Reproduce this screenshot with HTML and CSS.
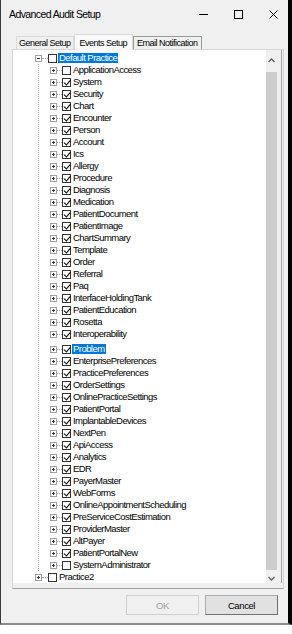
FILE: index.html
```html
<!DOCTYPE html>
<html lang="en">
<head>
    <meta charset="UTF-8">
    <meta name="viewport" content="width=device-width, initial-scale=1.0">
    <title>Advanced Audit Setup</title>
    <link rel="stylesheet" href="styles.css">
</head>
<body>

    <div class="window">
        <div class="titlebar">
            <span class="title">Advanced Audit Setup</span>
            <div class="controls">
                <svg width="9" height="9" viewBox="0 0 9 9"><path d="M0 4.5 H9" stroke="#000" stroke-width="1"/></svg>
                <svg width="9" height="9" viewBox="0 0 9 9"><rect x="0.5" y="0.5" width="8" height="8" fill="none" stroke="#000" stroke-width="1"/></svg>
                <svg width="9" height="9" viewBox="0 0 9 9"><path d="M0.5 0.5 L8.5 8.5 M8.5 0.5 L0.5 8.5" stroke="#000" stroke-width="1"/></svg>
            </div>
        </div>

        <div class="tabs">
            <div class="tab">General Setup</div>
            <div class="tab active">Events Setup</div>
            <div class="tab email">Email Notification</div>
        </div>

        <div class="tab-page">
            <div class="treebox">
                <div class="tree">
                    <div class="node root">
                        <span class="exp open"></span><i class="ln"></i><span class="chk"></span><span class="lbl sel">Default Practice</span>
                    </div>
                    <div class="children">
                        <div class="node"><span class="exp"></span><i class="ln"></i><span class="chk"></span><span class="lbl">ApplicationAccess</span></div>
                        <div class="node"><span class="exp"></span><i class="ln"></i><span class="chk on"></span><span class="lbl">System</span></div>
                        <div class="node"><span class="exp"></span><i class="ln"></i><span class="chk on"></span><span class="lbl">Security</span></div>
                        <div class="node"><span class="exp"></span><i class="ln"></i><span class="chk on"></span><span class="lbl">Chart</span></div>
                        <div class="node"><span class="exp"></span><i class="ln"></i><span class="chk on"></span><span class="lbl">Encounter</span></div>
                        <div class="node"><span class="exp"></span><i class="ln"></i><span class="chk on"></span><span class="lbl">Person</span></div>
                        <div class="node"><span class="exp"></span><i class="ln"></i><span class="chk on"></span><span class="lbl">Account</span></div>
                        <div class="node"><span class="exp"></span><i class="ln"></i><span class="chk on"></span><span class="lbl">Ics</span></div>
                        <div class="node"><span class="exp"></span><i class="ln"></i><span class="chk on"></span><span class="lbl">Allergy</span></div>
                        <div class="node"><span class="exp"></span><i class="ln"></i><span class="chk on"></span><span class="lbl">Procedure</span></div>
                        <div class="node"><span class="exp"></span><i class="ln"></i><span class="chk on"></span><span class="lbl">Diagnosis</span></div>
                        <div class="node"><span class="exp"></span><i class="ln"></i><span class="chk on"></span><span class="lbl">Medication</span></div>
                        <div class="node"><span class="exp"></span><i class="ln"></i><span class="chk on"></span><span class="lbl">PatientDocument</span></div>
                        <div class="node"><span class="exp"></span><i class="ln"></i><span class="chk on"></span><span class="lbl">PatientImage</span></div>
                        <div class="node"><span class="exp"></span><i class="ln"></i><span class="chk on"></span><span class="lbl">ChartSummary</span></div>
                        <div class="node"><span class="exp"></span><i class="ln"></i><span class="chk on"></span><span class="lbl">Template</span></div>
                        <div class="node"><span class="exp"></span><i class="ln"></i><span class="chk on"></span><span class="lbl">Order</span></div>
                        <div class="node"><span class="exp"></span><i class="ln"></i><span class="chk on"></span><span class="lbl">Referral</span></div>
                        <div class="node"><span class="exp"></span><i class="ln"></i><span class="chk on"></span><span class="lbl">Paq</span></div>
                        <div class="node"><span class="exp"></span><i class="ln"></i><span class="chk on"></span><span class="lbl">InterfaceHoldingTank</span></div>
                        <div class="node"><span class="exp"></span><i class="ln"></i><span class="chk on"></span><span class="lbl">PatientEducation</span></div>
                        <div class="node"><span class="exp"></span><i class="ln"></i><span class="chk on"></span><span class="lbl">Rosetta</span></div>
                        <div class="node"><span class="exp"></span><i class="ln"></i><span class="chk on"></span><span class="lbl">Interoperability</span></div>
                        <div class="node gap"><span class="exp"></span><i class="ln"></i><span class="chk on"></span><span class="lbl sel">Problem</span></div>
                        <div class="node"><span class="exp"></span><i class="ln"></i><span class="chk on"></span><span class="lbl">EnterprisePreferences</span></div>
                        <div class="node"><span class="exp"></span><i class="ln"></i><span class="chk on"></span><span class="lbl">PracticePreferences</span></div>
                        <div class="node"><span class="exp"></span><i class="ln"></i><span class="chk on"></span><span class="lbl">OrderSettings</span></div>
                        <div class="node"><span class="exp"></span><i class="ln"></i><span class="chk on"></span><span class="lbl">OnlinePracticeSettings</span></div>
                        <div class="node"><span class="exp"></span><i class="ln"></i><span class="chk on"></span><span class="lbl">PatientPortal</span></div>
                        <div class="node"><span class="exp"></span><i class="ln"></i><span class="chk on"></span><span class="lbl">ImplantableDevices</span></div>
                        <div class="node"><span class="exp"></span><i class="ln"></i><span class="chk on"></span><span class="lbl">NextPen</span></div>
                        <div class="node"><span class="exp"></span><i class="ln"></i><span class="chk on"></span><span class="lbl">ApiAccess</span></div>
                        <div class="node"><span class="exp"></span><i class="ln"></i><span class="chk on"></span><span class="lbl">Analytics</span></div>
                        <div class="node"><span class="exp"></span><i class="ln"></i><span class="chk on"></span><span class="lbl">EDR</span></div>
                        <div class="node"><span class="exp"></span><i class="ln"></i><span class="chk on"></span><span class="lbl">PayerMaster</span></div>
                        <div class="node"><span class="exp"></span><i class="ln"></i><span class="chk on"></span><span class="lbl">WebForms</span></div>
                        <div class="node"><span class="exp"></span><i class="ln"></i><span class="chk on"></span><span class="lbl">OnlineAppointmentScheduling</span></div>
                        <div class="node"><span class="exp"></span><i class="ln"></i><span class="chk on"></span><span class="lbl">PreServiceCostEstimation</span></div>
                        <div class="node"><span class="exp"></span><i class="ln"></i><span class="chk on"></span><span class="lbl">ProviderMaster</span></div>
                        <div class="node"><span class="exp"></span><i class="ln"></i><span class="chk on"></span><span class="lbl">AltPayer</span></div>
                        <div class="node"><span class="exp"></span><i class="ln"></i><span class="chk on"></span><span class="lbl">PatientPortalNew</span></div>
                        <div class="node"><span class="exp"></span><i class="ln"></i><span class="chk"></span><span class="lbl">SystemAdministrator</span></div>
                    </div>
                    <div class="node root">
                        <span class="exp"></span><i class="ln"></i><span class="chk"></span><span class="lbl">Practice2</span>
                    </div>
                </div>

                <div class="scroll">
                    <div class="arrow up">
                        <svg width="7" height="5" viewBox="0 0 7 5"><polyline points="0.5,4 3.5,1 6.5,4" fill="none" stroke="#606060" stroke-width="1.4"/></svg>
                    </div>
                    <div class="thumb"></div>
                    <div class="arrow down">
                        <svg width="7" height="5" viewBox="0 0 7 5"><polyline points="0.5,1 3.5,4 6.5,1" fill="none" stroke="#606060" stroke-width="1.4"/></svg>
                    </div>
                </div>
            </div>
        </div>

        <div class="actions">
            <button class="btn" disabled>OK</button>
            <button class="btn">Cancel</button>
        </div>
    </div>

</body>
</html>
```

FILE: styles.css
```css
* {
    margin: 0;
    padding: 0;
    box-sizing: border-box;
}
body {
    font-family: "Liberation Sans", Arial, sans-serif;
    background-color: #fff;
    color: #000;
}
.window {
    width: 292px;
    height: 625px;
    background-color: #f0f0f0;
    border-left: 1px solid #3c3c3c;
    border-right: 4px solid #000;
    border-bottom: 2px solid #8c8c8c;
    display: flex;
    flex-direction: column;
}

/* title bar */
.titlebar {
    height: 28px;
    display: flex;
    align-items: center;
    padding: 0 10px 0 8px;
    font-size: 10.5px;
    letter-spacing: -0.6px;
}
.controls {
    margin-left: auto;
    display: flex;
    gap: 26px;
}
.controls svg {
    display: block;
}

/* tabs */
.tabs {
    display: flex;
    align-items: flex-end;
    height: 16px;
    margin-top: 5px;
    padding-left: 15px;
}
.tab {
    height: 13px;
    padding: 0 2px;
    font-size: 9px;
    letter-spacing: -0.5px;
    line-height: 12px;
    border: 1px solid #dadada;
    border-bottom: none;
}
.tab.active {
    height: 16px;
    padding: 2px 5px 0;
    background-color: #f9f9f9;
    margin-bottom: -1px;
    position: relative;
}
.tab.email {
    padding: 0 3px;
    border-color: #9a9a9a;
}

/* tab page + tree */
.tab-page {
    height: 540px;
    margin: 0 4px 0 11px;
    border: 1px solid #d6d6d6;
    border-bottom-color: #a0a0a0;
    padding: 0 1px 4px 0;
}
.treebox {
    height: 533px;
    display: flex;
    border-right: 1px solid #a0a0a0;
}
.tree {
    flex: 1;
    background-color: #fff;
    padding: 2px 0 0 22px;
    font-size: 9.5px;
    letter-spacing: -0.55px;
    overflow: hidden;
}
.node {
    display: flex;
    align-items: center;
    height: 12px;
    white-space: nowrap;
}
.node.gap {
    margin-top: 3px;
}
.children {
    margin-left: 3px;
    border-left: 1px dotted #a8a8a8;
    padding-left: 11px;
}
.exp {
    width: 7px;
    height: 7px;
    border: 1px solid #a0a0a0;
    background-color: #fff;
    position: relative;
    flex: none;
}
.exp::before {
    content: "";
    position: absolute;
    left: 1px;
    top: 2px;
    width: 3px;
    height: 1px;
    background-color: #333;
}
.exp::after {
    content: "";
    position: absolute;
    left: 2px;
    top: 1px;
    width: 1px;
    height: 3px;
    background-color: #333;
}
.exp.open::after {
    display: none;
}
.ln {
    width: 5px;
    border-top: 1px dotted #a8a8a8;
    flex: none;
}
.root .ln {
    width: 6px;
}
.chk {
    width: 9px;
    height: 9px;
    border: 1px solid #333;
    background-color: #fff;
    position: relative;
    flex: none;
}
.chk.on::after {
    content: "";
    position: absolute;
    left: 2px;
    top: 0;
    width: 3px;
    height: 5px;
    border: solid #000;
    border-width: 0 1.6px 1.6px 0;
    transform: rotate(40deg);
}
.lbl {
    margin-left: 1px;
    padding: 0 1px;
    line-height: 10px;
}
.lbl.sel {
    background-color: #0078d7;
    color: #fff;
}

/* scrollbar */
.scroll {
    width: 15px;
    background-color: #f0f0f0;
    display: flex;
    flex-direction: column;
    align-items: flex-start;
}
.arrow {
    width: 11px;
    display: flex;
    justify-content: center;
}
.arrow.up {
    height: 22px;
    padding-top: 8px;
}
.arrow.down {
    height: 13px;
    padding-top: 6px;
}
.thumb {
    width: 11px;
    height: 498px;
    background-color: #cdcdcd;
}

/* buttons */
.actions {
    display: flex;
    justify-content: flex-end;
    gap: 6px;
    padding-right: 10px;
    margin-top: 6px;
}
.btn {
    width: 73px;
    height: 20px;
    font-family: "Liberation Sans", Arial, sans-serif;
    font-size: 9.5px;
    letter-spacing: -0.4px;
    color: #000;
    background-color: #e1e1e1;
    border: 1px solid #adadad;
    border-right-color: #707070;
    border-bottom-color: #707070;
}
.btn:disabled {
    color: #a0a0a0;
    background-color: #f0f0f0;
    border-color: #cfcfcf;
}
```
